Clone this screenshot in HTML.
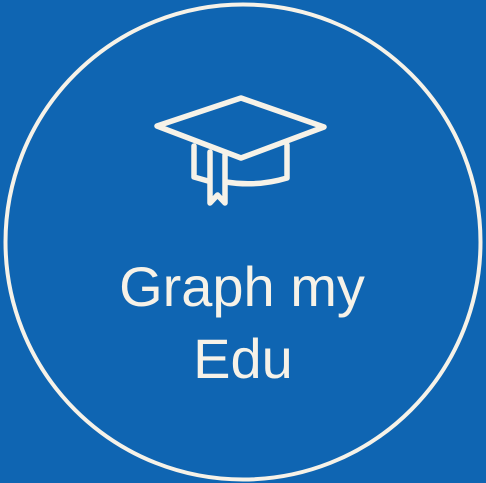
<!DOCTYPE html>
<html><head><style>
html,body{margin:0;padding:0;width:486px;height:483px;background:#0f65b2;overflow:hidden}
svg{position:absolute;left:0;top:0}
</style></head><body>
<svg width="486" height="483" viewBox="0 0 486 483">
<circle cx="243" cy="242" r="237.5" fill="none" stroke="#f6f2e8" stroke-width="4"/>
<g fill="none" stroke="#f6f2e8" stroke-width="5.5" stroke-linejoin="round" stroke-linecap="round">
<polygon points="157,126 241,98 324,127 241,158"/>
<path d="M194,146 V177 L208,181"/>
<path d="M210,152 V203 L217.5,195 L225,203 V155"/>
<path d="M287,145 V178 Q257,187 226,182"/>
</g>
<g fill="#f6f2e8" font-family="'Liberation Sans',sans-serif" font-size="56" text-anchor="middle">
<text x="242" y="306">Graph my</text>
<text x="243" y="378">Edu</text>
</g>
</svg>
</body></html>
